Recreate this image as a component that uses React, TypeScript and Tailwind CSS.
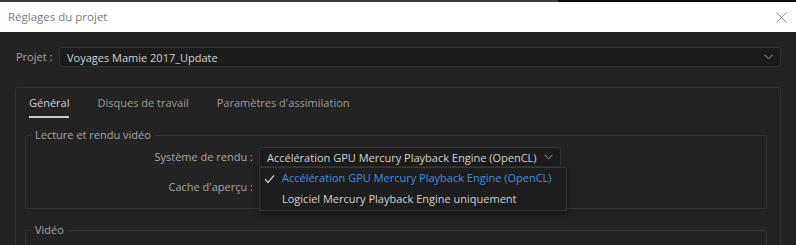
import React from "react";

function Chevron() {
  return (
    <svg width="9" height="6" viewBox="0 0 9 6" className="shrink-0">
      <path d="M0.5 0.8 L4.5 4.8 L8.5 0.8" fill="none" stroke="#a0a0a0" strokeWidth="1" />
    </svg>
  );
}

function Select({ text, className = "" }: { text: string; className?: string }) {
  return (
    <div
      className={
        "flex h-[20px] items-center justify-between rounded-[3px] border border-[#333333] bg-[#1c1c1c] pl-[7px] pr-[7px] text-[11px] text-[#d2d2d2] " +
        className
      }
    >
      <span className="whitespace-nowrap leading-none">{text}</span>
      <Chevron />
    </div>
  );
}

export default function App() {
  return (
    <div
      className="relative h-[245px] w-[796px] overflow-hidden bg-[#232323]"
      style={{ fontFamily: '"Open Sans", "Noto Sans", sans-serif' }}
    >
      <div className="flex h-[2px]">
        <div className="w-[558px] bg-[#3a3a3a]" />
        <div className="flex-1 bg-[#0c0c0c]" />
      </div>
      <div className="flex h-[30px] items-center justify-between bg-white pl-[8px] pr-[9px]">
        <span className="text-[11.5px] text-[#7a7a7a]">Réglages du projet</span>
        <svg width="11" height="11" viewBox="0 0 11 11">
          <path d="M0.5 0.5 L10.5 10.5 M10.5 0.5 L0.5 10.5" stroke="#8c8c8c" strokeWidth="1" />
        </svg>
      </div>
      <div className="pl-[15px] pr-[15px] pt-[15px]">
        <div className="flex h-[20px] items-center">
          <span className="w-[44px] pl-[1px] text-[11px] text-[#a6a6a6]">Projet :</span>
          <Select text="Voyages Mamie 2017_Update" className="flex-1 pr-[6px]" />
        </div>
        <div className="mt-[20px] rounded-[3px] border border-[#333333] pl-[9px] pr-[13px]">
          <div className="flex h-[30px] items-end gap-[28px] pl-[4px] text-[11px]">
            <div className="flex flex-col items-stretch">
              <span className="text-[#d0d0d0] leading-[16px]">Général</span>
              <div className="mt-[5px] h-[2px] bg-[#c8c8c8]" />
            </div>
            <div className="flex flex-col">
              <span className="text-[#9c9c9c] leading-[16px]">Disques de travail</span>
              <div className="mt-[5px] h-[2px]" />
            </div>
            <div className="flex flex-col">
              <span className="text-[#9c9c9c] leading-[16px]">Paramètres d'assimilation</span>
              <div className="mt-[5px] h-[2px]" />
            </div>
          </div>
          <fieldset className="relative mt-[9px] rounded-[3px] border border-[#333333] pb-[11px]">
            <legend className="ml-[5px] px-[4px] text-[11px] leading-[16px] text-[#a6a6a6]">
              Lecture et rendu vidéo
            </legend>
            <div className="mt-[4px] flex h-[20px] items-center">
              <span className="w-[227px] text-right text-[11px] text-[#a6a6a6]">Système de rendu :</span>
              <Select
                text="Accélération GPU Mercury Playback Engine (OpenCL)"
                className="ml-[6px] w-[302px]"
              />
            </div>
            <div className="mt-[10px] flex h-[20px] items-center">
              <span className="w-[227px] text-right text-[11px] text-[#a6a6a6]">Cache d'aperçu :</span>
            </div>
            <div className="absolute left-[233px] top-[24px] z-10 w-[308px] border border-[#363636] bg-[#1e1e1e] text-[11px] shadow-[0_2px_6px_rgba(0,0,0,0.5)]">
              <div className="flex h-[21px] items-center">
                <svg width="22" height="10" viewBox="0 0 22 10" className="shrink-0">
                  <path d="M5 5 L8 8.5 L14 1.5" fill="none" stroke="#c8c8c8" strokeWidth="1.2" />
                </svg>
                <span className="whitespace-nowrap text-[#3f8fe0]">Accélération GPU Mercury Playback Engine (OpenCL)</span>
              </div>
              <div className="flex h-[21px] items-center pl-[22px]">
                <span className="whitespace-nowrap text-[#d2d2d2]">Logiciel Mercury Playback Engine uniquement</span>
              </div>
            </div>
          </fieldset>
          <fieldset className="mt-[13px] h-[60px] rounded-[3px] border border-[#333333]">
            <legend className="ml-[5px] px-[4px] text-[11px] leading-[16px] text-[#a6a6a6]">Vidéo</legend>
          </fieldset>
        </div>
      </div>
    </div>
  );
}
